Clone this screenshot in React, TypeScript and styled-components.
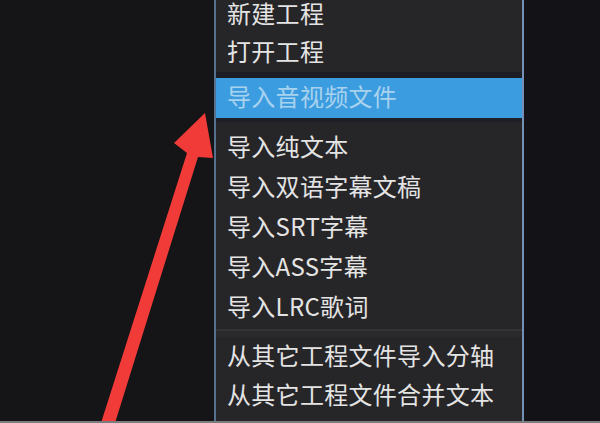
import React from "react";
import styled, { createGlobalStyle } from "styled-components";

type Item = { label: string; active?: boolean };
type Group = { items: Item[]; rowHeight: number; after?: "dark" | "darkWide" | "light" };

const groups: Group[] = [
  { items: [{ label: "新建工程" }, { label: "打开工程" }], rowHeight: 39, after: "dark" },
  { items: [{ label: "导入音视频文件", active: true }], rowHeight: 40, after: "darkWide" },
  {
    items: [
      { label: "导入纯文本" },
      { label: "导入双语字幕文稿" },
      { label: "导入SRT字幕" },
      { label: "导入ASS字幕" },
      { label: "导入LRC歌词" },
    ],
    rowHeight: 40,
    after: "light",
  },
  {
    items: [{ label: "从其它工程文件导入分轴" }, { label: "从其它工程文件合并文本" }],
    rowHeight: 39,
  },
];

function App() {
  return (
    <>
      <GlobalStyle />
      <Page>
        <Stage>
          <Menu>
            {groups.map((g, gi) => (
              <React.Fragment key={gi}>
                {g.items.map((it) => (
                  <MenuItem key={it.label} $active={it.active} $h={g.rowHeight}>
                    {it.label}
                  </MenuItem>
                ))}
                {g.after && <Separator $kind={g.after} />}
              </React.Fragment>
            ))}
          </Menu>
          <Arrow viewBox="0 0 600 421" width="600" height="421">
            <polygon
              points="205,113 213,158 198,157 115,423 101,423 187,153 174,143"
              fill="#f03b38"
            />
          </Arrow>
        </Stage>
        <BottomEdge />
      </Page>
    </>
  );
}

const GlobalStyle = createGlobalStyle`
  html, body {
    margin: 0;
    padding: 0;
    background: #151416;
    overflow: hidden;
  }
`;

const Page = styled.div`
  width: 600px;
  height: 423px;
  display: flex;
  flex-direction: column;
  background: #151416;
  font-family: "Noto Sans CJK SC", "Noto Sans", sans-serif;
`;

const Stage = styled.div`
  position: relative;
  flex: 1;
  overflow: hidden;
  display: flex;
  background: linear-gradient(to right, #151416 0 214px, #131317 524px);
`;

const Menu = styled.div`
  margin-left: 214px;
  width: 306px;
  display: flex;
  flex-direction: column;
  background: #262528;
  border-left: 2px solid #56708f;
  border-right: 2px solid #7590b6;
`;

const MenuItem = styled.div<{ $active?: boolean; $h: number }>`
  height: ${(p) => p.$h}px;
  box-sizing: border-box;
  padding-bottom: 4px;
  flex: none;
  display: flex;
  align-items: center;
  padding-left: 11px;
  font-size: 24px;
  line-height: 1;
  letter-spacing: 0.3px;
  color: ${(p) => (p.$active ? "#a8d2ee" : "#e4e4e4")};
  background: ${(p) => (p.$active ? "#3c9ce0" : "transparent")};

  &:first-child {
    height: 33px;
    padding-bottom: 7px;
  }
`;

const Separator = styled.div<{ $kind: "dark" | "darkWide" | "light" }>`
  flex: none;
  height: ${(p) => (p.$kind === "dark" ? 6 : p.$kind === "darkWide" ? 10 : 9)}px;
  background: ${(p) =>
    p.$kind === "dark"
      ? "#1c1e24"
      : p.$kind === "darkWide"
      ? "linear-gradient(#1d1f25 0 4px, #262528 4px)"
      : "linear-gradient(#262528 0 1px, #343337 1px 3px, #2a292c 3px)"};
`;

const Arrow = styled.svg`
  position: absolute;
  left: 0;
  top: 0;
  pointer-events: none;
`;

const BottomEdge = styled.div`
  height: 2px;
  background: #7c7c7e;
`;

export default App;
